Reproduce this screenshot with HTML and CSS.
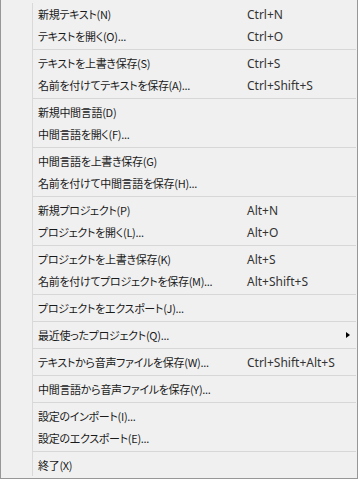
FILE: index.html
```html
<!DOCTYPE html>
<html lang="ja">
<head>
    <meta charset="UTF-8">
    <meta name="viewport" content="width=device-width, initial-scale=1.0">
    <title>ファイル</title>
    <link rel="stylesheet" href="styles.css">
</head>
<body>
    <div class="menu">
        <div class="items">
            <div class="item"><span class="label">新規テキスト(N)</span><span class="key">Ctrl+N</span></div>
            <div class="item"><span class="label">テキストを開く(O)...</span><span class="key">Ctrl+O</span></div>
            <div class="sep"></div>
            <div class="item"><span class="label">テキストを上書き保存(S)</span><span class="key">Ctrl+S</span></div>
            <div class="item"><span class="label">名前を付けてテキストを保存(A)...</span><span class="key">Ctrl+Shift+S</span></div>
            <div class="sep"></div>
            <div class="item"><span class="label">新規中間言語(D)</span><span class="key"></span></div>
            <div class="item"><span class="label">中間言語を開く(F)...</span><span class="key"></span></div>
            <div class="sep"></div>
            <div class="item"><span class="label">中間言語を上書き保存(G)</span><span class="key"></span></div>
            <div class="item"><span class="label">名前を付けて中間言語を保存(H)...</span><span class="key"></span></div>
            <div class="sep"></div>
            <div class="item"><span class="label">新規プロジェクト(P)</span><span class="key">Alt+N</span></div>
            <div class="item"><span class="label">プロジェクトを開く(L)...</span><span class="key">Alt+O</span></div>
            <div class="sep"></div>
            <div class="item"><span class="label">プロジェクトを上書き保存(K)</span><span class="key">Alt+S</span></div>
            <div class="item"><span class="label">名前を付けてプロジェクトを保存(M)...</span><span class="key">Alt+Shift+S</span></div>
            <div class="sep"></div>
            <div class="item"><span class="label">プロジェクトをエクスポート(J)...</span><span class="key"></span></div>
            <div class="sep"></div>
            <div class="item"><span class="label">最近使ったプロジェクト(Q)...</span><span class="key"></span><span class="arrow"></span></div>
            <div class="sep"></div>
            <div class="item"><span class="label">テキストから音声ファイルを保存(W)...</span><span class="key">Ctrl+Shift+Alt+S</span></div>
            <div class="sep"></div>
            <div class="item"><span class="label">中間言語から音声ファイルを保存(Y)...</span><span class="key"></span></div>
            <div class="sep"></div>
            <div class="item"><span class="label">設定のインポート(I)...</span><span class="key"></span></div>
            <div class="item"><span class="label">設定のエクスポート(E)...</span><span class="key"></span></div>
            <div class="sep"></div>
            <div class="item"><span class="label">終了(X)</span><span class="key"></span></div>
        </div>
    </div>
</body>
</html>
```

FILE: styles.css
```css
html, body {
    margin: 0;
    padding: 0;
    background: #f0f0f0;
}

.menu {
    box-sizing: border-box;
    width: 358px;
    height: 479px;
    background: #f0f0f0;
    border: 1px solid #979797;
    border-top: none;
    padding: 3px 0 2px;
    font-family: "Noto Sans CJK JP", "Noto Sans", sans-serif;
    font-size: 12px;
    color: #1a1a1a;
}

.items {
    background: linear-gradient(to right, transparent 31px, #d9d9d9 31px, #d9d9d9 32px, transparent 32px);
}

.item {
    height: 22px;
    display: flex;
    align-items: center;
    padding-left: 37px;
    white-space: nowrap;
}

.label {
    width: 209px;
    font-size: 11px;
    letter-spacing: -0.3px;
    font-feature-settings: "palt";
}

.key {
    flex: 1;
    font-family: "Noto Sans", sans-serif;
    color: #333;
}

.arrow {
    width: 0;
    height: 0;
    margin-right: 7px;
    border-top: 3.5px solid transparent;
    border-bottom: 3.5px solid transparent;
    border-left: 4px solid #000;
}

.sep {
    height: 5px;
    margin: 0 1px 0 32px;
    background: linear-gradient(#f0f0f0 2px, #d7d7d7 2px, #d7d7d7 3px, #f0f0f0 3px);
}
```
